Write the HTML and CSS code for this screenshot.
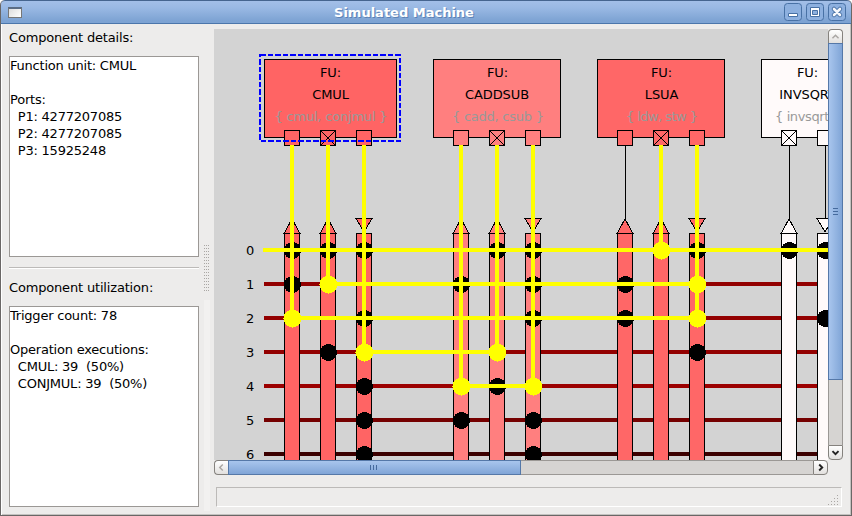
FILE: index.html
```html
<!DOCTYPE html>
<html lang="en">
<head>
<meta charset="utf-8">
<title>Simulated Machine</title>
<link rel="stylesheet" href="styles.css">
</head>
<body>
<div class="window">
  <header class="titlebar">
    <span class="app-icon"></span>
    <h1 class="title">Simulated Machine</h1>
    <div class="window-buttons">
      <svg class="win-btn" viewBox="0 0 18 18"><rect x=".5" y=".5" width="17" height="17" rx="3"/><path class="glyph" d="M4.500 10.500h9v3h-9z"/></svg>
      <svg class="win-btn" viewBox="0 0 18 18"><rect x=".5" y=".5" width="17" height="17" rx="3"/><path class="glyph" d="M4.500 4.500h9v9h-9z"/><path class="hole" d="M6.500 7.500h5v4h-5z"/></svg>
      <svg class="win-btn" viewBox="0 0 18 18"><rect x=".5" y=".5" width="17" height="17" rx="3"/><path class="cross-edge" d="M6 6l6 6M12 6l-6 6"/><path class="cross" d="M6 6l6 6M12 6l-6 6"/></svg>
    </div>
  </header>
  <main class="body">
    <aside class="side">
      <h2 class="label">Component details:</h2>
      <pre class="textbox">Function unit: CMUL

Ports:
  P1: 4277207085
  P2: 4277207085
  P3: 15925248</pre>
      <div class="rule"></div>
      <h2 class="label second">Component utilization:</h2>
      <pre class="textbox">Trigger count: 78

Operation executions:
  CMUL: 39  (50%)
  CONJMUL: 39  (50%)</pre>
    </aside>
    <div class="sash"><span class="dots"></span><span class="strip"></span></div>
    <section class="view">
      <svg class="canvas" viewBox="214 29 614 431">
        <defs>
          <g id="up"><path d="M.5 204.500h15v260h-15z"/><path d="M0 204.500h16L8 190z"/></g>
          <g id="down"><path d="M.5 204.500h15v260h-15z"/><path d="M0 189.500h16L8 203z"/></g>
          <path id="port" d="M.5 .5h15v15h-15z"/>
          <path id="trigger" d="M.5 .5h15v15h-15zM1 1l14 14M15 1L1 15"/>
          <circle id="dot" r="8.5"/>
          <circle id="node" r="9"/>
        </defs>
        <g class="crisp">
          <g class="bus">
            <path stroke="#930000" d="M264 284h564M264 318h564"/>
            <path stroke="#930000" d="M264 352h564"/>
            <path stroke="#9c0000" d="M264 386h564"/>
            <path stroke="#750000" d="M264 420h564"/>
            <path stroke="#3c0000" d="M264 454h564"/>
          </g>
          <path class="wire" d="M625.5 145v76M789.5 145v76M825.5 145v76"/>
          <g class="unit cmul">
            <path d="M264.5 59.5h132v78h-132z"/>
            <use href="#port" x="284" y="130"/><use href="#trigger" x="320" y="130"/><use href="#port" x="356" y="130"/>
            <use href="#up" x="284" y="29"/><use href="#up" x="320" y="29"/><use href="#down" x="356" y="29"/>
          </g>
          <g class="unit cadd">
            <path d="M433.5 59.5h127v78h-127z"/>
            <use href="#port" x="453" y="130"/><use href="#trigger" x="489" y="130"/><use href="#port" x="525" y="130"/>
            <use href="#up" x="453" y="29"/><use href="#up" x="489" y="29"/><use href="#down" x="525" y="29"/>
          </g>
          <g class="unit lsua">
            <path d="M597.5 59.5h127v78h-127z"/>
            <use href="#port" x="617" y="130"/><use href="#trigger" x="653" y="130"/><use href="#port" x="689" y="130"/>
            <use href="#up" x="617" y="29"/><use href="#up" x="653" y="29"/><use href="#down" x="689" y="29"/>
          </g>
          <g class="unit inv">
            <path d="M761.5 59.5h127v78h-127z"/>
            <use href="#trigger" x="781" y="130"/><use href="#port" x="817" y="130"/>
            <use href="#up" x="781" y="29"/><use href="#down" x="817" y="29"/>
          </g>
          <g>
            <use href="#dot" x="292.5" y="250.5"/><use href="#dot" x="328.5" y="250.5"/><use href="#dot" x="364.5" y="250.5"/>
            <use href="#dot" x="497.5" y="250.5"/><use href="#dot" x="533.5" y="250.5"/><use href="#dot" x="697.5" y="250.5"/>
            <use href="#dot" x="789.5" y="250.5"/><use href="#dot" x="825.5" y="250.5"/>
            <use href="#dot" x="292.5" y="284.5"/><use href="#dot" x="461.5" y="284.5"/><use href="#dot" x="533.5" y="284.5"/><use href="#dot" x="625.5" y="284.5"/>
            <use href="#dot" x="364.5" y="318.5"/><use href="#dot" x="533.5" y="318.5"/><use href="#dot" x="625.5" y="318.5"/><use href="#dot" x="825.5" y="318.5"/>
            <use href="#dot" x="328.5" y="352.5"/><use href="#dot" x="697.5" y="352.5"/>
            <use href="#dot" x="364.5" y="386.5"/><use href="#dot" x="497.5" y="386.5"/>
            <use href="#dot" x="364.5" y="420.5"/><use href="#dot" x="461.5" y="420.5"/><use href="#dot" x="533.5" y="420.5"/>
            <use href="#dot" x="364.5" y="454.5"/><use href="#dot" x="533.5" y="454.5"/>
          </g>
          <rect class="selection" x="260" y="55" width="140" height="86"/>
          <path class="active" d="M263 250H828M328 284H697M292 318H697M364 352H497M461 386H533M292 145V318M328 145V284M364 145V352M461 145V386M497 145V352M533 145V386M661 145V250M697 145V318"/>
          <g class="nodes">
            <use href="#node" x="661.5" y="250.5"/>
            <use href="#node" x="328.5" y="284.5"/><use href="#node" x="697.5" y="284.5"/>
            <use href="#node" x="292.5" y="318.5"/><use href="#node" x="697.5" y="318.5"/>
            <use href="#node" x="364.5" y="352.5"/><use href="#node" x="497.5" y="352.5"/>
            <use href="#node" x="461.5" y="386.5"/><use href="#node" x="533.5" y="386.5"/>
          </g>
        </g>
        <g class="names">
          <text x="330.5" y="77">FU:</text><text x="330.5" y="99">CMUL</text>
          <text x="497.5" y="77">FU:</text><text x="497" y="99">CADDSUB</text>
          <text x="661.5" y="77">FU:</text><text x="661.5" y="99">LSUA</text>
          <text x="807.5" y="77">FU:</text><text x="807.5" y="99">INVSQRT</text>
        </g>
        <g class="ops">
          <text x="274.500" y="121" textLength="113">{ cmul, conjmul }</text>
          <text x="452" y="121" textLength="92">{ cadd, csub }</text>
          <text x="626" y="121" textLength="72">{ ldw, stw }</text>
          <text x="775" y="121" textLength="66">{ invsqrt }</text>
        </g>
        <g class="names">
          <text x="250" y="255">0</text><text x="250" y="289">1</text><text x="250" y="323">2</text><text x="250" y="357">3</text>
          <text x="250" y="391">4</text><text x="250" y="425">5</text><text x="250" y="459">6</text>
        </g>
      </svg>
      <div class="vscroll">
        <svg class="btn top" viewBox="0 0 15 14"><path class="arrow off" d="M4 9l3.500-3.500L11 9"/></svg>
        <div class="thumb"><i class="ridges"></i></div>
        <div class="trough"></div>
        <svg class="btn bottom" viewBox="0 0 15 15"><path class="arrow" d="M4 6l3.500 3.500L11 6"/></svg>
      </div>
      <div class="hscroll">
        <svg class="btn left" viewBox="0 0 15 15"><path class="arrow off" d="M9 4L5.500 7.500L9 11"/></svg>
        <div class="thumb"><i class="ridges"></i></div>
        <div class="trough"></div>
        <svg class="btn right" viewBox="0 0 15 15"><path class="arrow" d="M6 4l3.500 3.500L6 11"/></svg>
      </div>
      <footer class="status">
        <svg class="grip" viewBox="0 0 11 11"><path d="M9 0h1v1h-1zM6 3h1v1h-1zM9 3h1v1h-1zM3 6h1v1h-1zM6 6h1v1h-1zM9 6h1v1h-1zM0 9h1v1h-1zM3 9h1v1h-1zM6 9h1v1h-1zM9 9h1v1h-1z"/></svg>
      </footer>
    </section>
  </main>
</div>
</body>
</html>
```
FILE: styles.css
```css
* { box-sizing: border-box; }
body {
  margin: 0;
  background: #fff;
  font: 13px/17px "DejaVu Sans", sans-serif;
  color: #000;
}
.window {
  display: flex;
  flex-direction: column;
  width: 852px;
  height: 516px;
  background: #edeceb;
  border: 1px solid #6a6766;
  border-top: 0;
  border-radius: 5px 5px 0 0;
  overflow: hidden;
  box-shadow: inset 1px 0 #fff, inset -1px -1px #c4c2c0;
}
.titlebar {
  display: flex;
  align-items: center;
  height: 24px;
  flex: none;
  margin: 0 -1px;
  padding: 0 5px 0 8px;
  background: linear-gradient(#a3bfe8, #9ab9e4 30%, #7da3d3 90%);
  border: 1px solid #46658f;
  border-bottom-color: #4b76ab;
  border-radius: 5px 5px 0 0;
}
.app-icon {
  width: 14px;
  height: 11px;
  margin-left: -1px;
  border: 1px solid #777;
  border-top: 2px solid #5b6c83;
  background: linear-gradient(135deg, #ddd, #fff);
}
.title {
  flex: 1;
  margin: 0 0 0 2px;
  font-size: 13px;
  text-align: center;
  color: #fff;
  text-shadow: 1px 1px #5c82b5;
}
.window-buttons { display: flex; gap: 4px; }
.win-btn { display: block; width: 18px; height: 18px; fill: #8db0df; stroke: #4871a5; }
.win-btn .glyph { fill: #fff; stroke: #4871a5; }
.win-btn .hole { fill: #8db0df; stroke: #4871a5; }
.win-btn .cross-edge { stroke: #4871a5; stroke-width: 4.5; stroke-linecap: round; }
.win-btn .cross { stroke: #f4f7fc; stroke-width: 2.6; stroke-linecap: round; }

.body { display: flex; flex: 1; min-height: 0; }
.side { width: 190px; margin-left: 8px; padding-top: 5px; }
.label { margin: 0 0 10px; font: inherit; height: 17px; letter-spacing: -0.17px; }
.textbox {
  width: 190px;
  height: 201px;
  margin: 0;
  padding: 0;
  border: 1px solid #9b9895;
  background: #fff;
  font: inherit;
  letter-spacing: -0.22px;
  overflow: hidden;
}
.rule { height: 2px; margin-top: 10px; background: #bcbab8; border-bottom: 1px solid #fff; }
.label.second { margin-top: 10px; }
.sash {
  display: flex;
  flex-direction: column;
  width: 6px;
  margin-left: 5px;
  padding-top: 221px;
}
.dots {
  height: 48px;
  background: radial-gradient(circle at 0.5px 0.5px, #aaa7a4 0.6px, transparent 0.7px) 0 0 / 2px 3px;
}
.strip { height: 211px; margin-top: 7px; background: #f2f1f0; }

.view {
  display: grid;
  grid-template-columns: 614px 15px;
  grid-template-rows: 431px 15px 19px;
  margin: 5px 0 0 4px;
}
.canvas { display: block; width: 614px; height: 431px; background: #d3d3d3; font-size: 13px; }
.crisp { shape-rendering: crispEdges; }
.bus, .active { fill: none; stroke-width: 4; }
.active { stroke: #ff0; }
.nodes { fill: #ff0; }
.unit, .wire { stroke: #000; stroke-width: 1; }
.cmul { fill: #ff6464; }
.cadd { fill: #ff7f7f; }
.lsua { fill: #ff6767; }
.inv { fill: #fffafa; }
.selection { fill: none; stroke: #00f; stroke-width: 2; stroke-dasharray: 5.5 2; }
.names { text-anchor: middle; letter-spacing: -0.1px; }
.ops { fill: #999; }

.vscroll { display: flex; flex-direction: column; height: 431px; }
.hscroll { display: flex; grid-column: 1; }
.btn { flex: none; background: linear-gradient(#fff, #e2e0de); border: 1px solid #85827e; }
.vscroll .btn { width: 15px; }
.vscroll .top { height: 14px; border-bottom: 0; border-radius: 4px 4px 0 0; }
.vscroll .bottom { height: 15px; border-radius: 0 0 4px 4px; }
.hscroll .btn { width: 15px; height: 15px; }
.hscroll .left { width: 14px; border-radius: 4px 0 0 4px; border-right: 0; }
.hscroll .right { border-radius: 0 4px 4px 0; }
.arrow { fill: none; stroke: #222; stroke-width: 2.2; }
.arrow.off { stroke: #aaa7a4; stroke-width: 1.7; }
.thumb { display: flex; align-items: center; justify-content: center; border: 1px solid #5578a8; }
.vscroll .thumb { height: 337px; background: linear-gradient(90deg, #a8c5ed, #80a5d7); }
.hscroll .thumb { width: 293px; padding-right: 3px; background: linear-gradient(#a8c5ed, #80a5d7); }
.ridges { width: 7px; height: 5px; background: repeating-linear-gradient(90deg, #456a9d 0 1px, transparent 1px 3px); }
.vscroll .ridges { width: 5px; height: 7px; background: repeating-linear-gradient(#456a9d 0 1px, transparent 1px 3px); }
.trough { flex: 1; background: #d6d4d2; border: 1px solid #9b9895; }
.vscroll .trough { border-width: 0 1px; }
.hscroll .trough { border-width: 1px 0; }
.status {
  display: flex;
  justify-content: flex-end;
  align-items: flex-end;
  grid-column: 1 / 3;
  width: 626px;
  height: 20px;
  margin: 12px 0 0 2px;
  border: 1px solid;
  border-color: #bcbab8 #fff #fff #bcbab8;
}
.grip { width: 11px; height: 11px; margin: 0 2px 0 0; fill: #aaa7a4; shape-rendering: crispEdges; }
```
